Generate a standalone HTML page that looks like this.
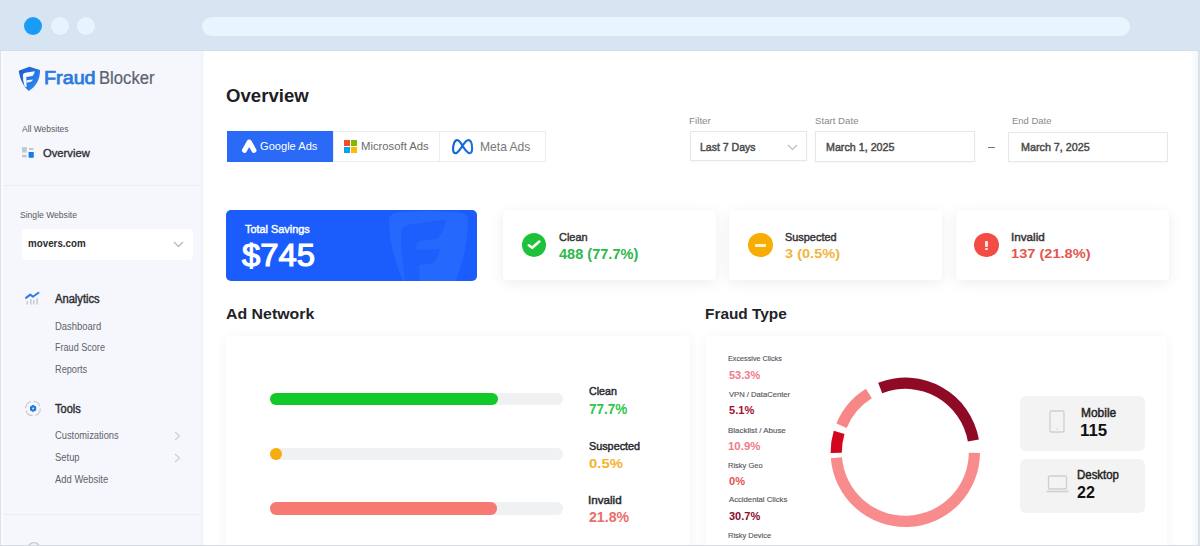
<!DOCTYPE html>
<html><head><meta charset="utf-8"><style>
html,body{margin:0;padding:0;}
body{width:1200px;height:546px;position:relative;overflow:hidden;background:#fff;font-family:"Liberation Sans",sans-serif;}
.t{position:absolute;white-space:nowrap;line-height:1;transform-origin:0 0;}
</style></head><body>
<div style="position:absolute;left:0px;top:0px;width:1200px;height:51px;background:#d6e5f1"></div>
<div style="position:absolute;left:24px;top:16.5px;width:18px;height:18px;border-radius:50%;background:#1a9bf6"></div>
<div style="position:absolute;left:51.2px;top:16.5px;width:18px;height:18px;border-radius:50%;background:#e7f4fe"></div>
<div style="position:absolute;left:77.4px;top:16.5px;width:18px;height:18px;border-radius:50%;background:#e7f4fe"></div>
<div style="position:absolute;left:202px;top:16.5px;width:928px;height:19.0px;background:#e8f4fe;border-radius:9.5px"></div>
<div style="position:absolute;left:0px;top:51px;width:203px;height:495px;background:#f5f7fc"></div>
<div style="position:absolute;left:3px;top:184.5px;width:200px;height:1.5px;background:#ebedf2"></div>
<div style="position:absolute;left:3px;top:513.5px;width:200px;height:1.5px;background:#ebedf2"></div>
<div style="position:absolute;left:200px;top:51px;width:4px;height:495px;background:linear-gradient(90deg,#f5f7fc,#f1f3f7 60%,#fcfcfd)"></div>
<svg style="position:absolute;left:0;top:0" width="60" height="100" viewBox="0 0 60 100">
<defs><linearGradient id="lg" x1="0" y1="0" x2="1" y2="1"><stop offset="0" stop-color="#1c55d4"/><stop offset="1" stop-color="#2e95f2"/></linearGradient></defs>
<path d="M18.8 70.8 L29.5 66.8 L40 69.9 C40.2 78.5 36.5 86 28.7 91 C24 87 19.8 80 18.8 70.8 Z" fill="url(#lg)"/>
<path d="M22.9 74.6 Q23.4 73.1 25.2 72.7 L34.9 71.2 Q34.2 74.3 32.6 75.9 L26.3 77.1 L26.6 87 L24.6 86.5 Q22.7 80.5 22.9 74.6 Z" fill="#fff" opacity="0.97"/>
<path d="M26.4 80.2 L33 79.4 Q32 81.4 30.3 82.1 L26.5 82.7 Z" fill="#fff" opacity="0.9"/>
</svg>
<div class="t" style="left:44.37px;top:69.94px;font-size:17.44px;font-weight:400;color:#2b7be0;transform:scaleX(1.1327);-webkit-text-stroke:0.75px #2b7be0;">Fraud</div>
<div class="t" style="left:99.32px;top:69.94px;font-size:17.44px;font-weight:400;color:#5b6371;transform:scaleX(0.9563);-webkit-text-stroke:0.2px #5b6371;">Blocker</div>
<div class="t" style="left:21.88px;top:123.50px;font-size:9.45px;font-weight:400;color:#555a60;transform:scaleX(0.8981);">All Websites</div>
<svg style="position:absolute;left:0;top:0" width="60" height="170" viewBox="0 0 60 170">
<rect x="22" y="147.1" width="4.8" height="5.5" fill="#c4c8cf"/><rect x="29" y="148" width="4.4" height="2" fill="#c4c8cf"/>
<rect x="22" y="154.8" width="4.8" height="2.6" fill="#c4c8cf"/><rect x="28.6" y="151.9" width="5.2" height="5.9" rx="0.6" fill="#1a7ae3"/></svg>
<div class="t" style="left:42.87px;top:148.00px;font-size:11.34px;font-weight:400;color:#2f3034;transform:scaleX(0.9906);-webkit-text-stroke:0.35px #2f3034;">Overview</div>
<div class="t" style="left:19.91px;top:210.83px;font-size:9.30px;font-weight:400;color:#555a60;transform:scaleX(0.9206);">Single Website</div>
<div style="position:absolute;left:22px;top:228.5px;width:171px;height:31.5px;background:#fff;border-radius:4px"></div>
<div class="t" style="left:27.56px;top:238.68px;font-size:10.42px;font-weight:700;color:#2a2b2f;transform:scaleX(0.9408);">movers.com</div>
<svg style="position:absolute;left:173px;top:241px" width="11" height="7" viewBox="0 0 11 7"><path d="M1 1 L5.5 5.5 L10 1" stroke="#b5b8bd" stroke-width="1.3" fill="none"/></svg>
<svg style="position:absolute;left:0;top:0" width="60" height="320" viewBox="0 0 60 320">
<path d="M26 297.9 L30.3 294.6 L32.9 296.7 L38.5 292.8" stroke="#2c7be5" stroke-width="2" fill="none" stroke-linecap="round" stroke-linejoin="round"/>
<rect x="26.5" y="300.9" width="1.5" height="3.6" fill="#c6cad1"/><rect x="30" y="299" width="1.5" height="5.5" fill="#c6cad1"/>
<rect x="33" y="300" width="1.5" height="4.5" fill="#c6cad1"/><rect x="36.4" y="298" width="1.5" height="6.5" fill="#c6cad1"/></svg>
<div class="t" style="left:55.27px;top:293.06px;font-size:12.21px;font-weight:400;color:#2f3034;transform:scaleX(0.9151);-webkit-text-stroke:0.45px #2f3034;">Analytics</div>
<div class="t" style="left:54.52px;top:320.82px;font-size:10.61px;font-weight:400;color:#606368;transform:scaleX(0.8898);">Dashboard</div>
<div class="t" style="left:54.55px;top:342.42px;font-size:10.61px;font-weight:400;color:#606368;transform:scaleX(0.8553);">Fraud Score</div>
<div class="t" style="left:54.54px;top:364.02px;font-size:10.61px;font-weight:400;color:#606368;transform:scaleX(0.8659);">Reports</div>
<svg style="position:absolute;left:0;top:0" width="60" height="430" viewBox="0 0 60 430">
<circle cx="33" cy="408.5" r="7.3" stroke="#c3c7cd" stroke-width="1.1" fill="none" stroke-dasharray="9 2.5"/>
<path d="M33.1 405.6 L35.6 407 L35.6 409.9 L33.1 411.3 L30.6 409.9 L30.6 407 Z" fill="#1f77e0" stroke="#1f77e0" stroke-width="1.2" stroke-linejoin="round"/>
<circle cx="33.1" cy="408.5" r="1.1" fill="#bfe6ff"/></svg>
<div class="t" style="left:55.05px;top:402.59px;font-size:12.06px;font-weight:400;color:#2f3034;transform:scaleX(0.9172);-webkit-text-stroke:0.45px #2f3034;">Tools</div>
<div class="t" style="left:54.83px;top:430.42px;font-size:10.61px;font-weight:400;color:#606368;transform:scaleX(0.8782);">Customizations</div>
<div class="t" style="left:54.88px;top:452.32px;font-size:10.61px;font-weight:400;color:#606368;transform:scaleX(0.8875);">Setup</div>
<div class="t" style="left:55.28px;top:474.12px;font-size:10.61px;font-weight:400;color:#606368;transform:scaleX(0.8878);">Add Website</div>
<svg style="position:absolute;left:173.5px;top:430.6px" width="7" height="10" viewBox="0 0 7 10"><path d="M1 1 L5.5 5 L1 9" stroke="#cbcdd1" stroke-width="1.1" fill="none"/></svg>
<svg style="position:absolute;left:173.5px;top:452.7px" width="7" height="10" viewBox="0 0 7 10"><path d="M1 1 L5.5 5 L1 9" stroke="#cbcdd1" stroke-width="1.1" fill="none"/></svg>
<div class="t" style="left:225.96px;top:87.34px;font-size:18.02px;font-weight:700;color:#1f2026;transform:scaleX(1.0323);">Overview</div>
<div style="position:absolute;left:226.8px;top:131.2px;width:106.19999999999999px;height:30.600000000000023px;background:#2a6af6"></div>
<div style="position:absolute;left:333px;top:131.2px;width:213px;height:30.600000000000023px;background:#fff;box-shadow:inset 0 0 0 1px #ededed"></div>
<div style="position:absolute;left:438.5px;top:131.2px;width:1.0px;height:30.600000000000023px;background:#ececec"></div>
<svg style="position:absolute;left:240px;top:137px" width="19" height="18" viewBox="0 0 19 18">
<path d="M4.4 13.4 L9.2 5 L14 13.4" stroke="#fff" stroke-width="5" stroke-linecap="round" stroke-linejoin="round" fill="none"/></svg>
<div class="t" style="left:259.94px;top:140.77px;font-size:10.90px;font-weight:400;color:#ffffff;transform:scaleX(1.0193);">Google Ads</div>
<svg style="position:absolute;left:344px;top:140px" width="13" height="13" viewBox="0 0 13 13">
<rect x="0" y="0" width="6" height="6" fill="#f25022"/><rect x="7" y="0" width="6" height="6" fill="#7fba00"/>
<rect x="0" y="7" width="6" height="6" fill="#00a4ef"/><rect x="7" y="7" width="6" height="6" fill="#ffb900"/></svg>
<div class="t" style="left:361.07px;top:140.77px;font-size:10.90px;font-weight:400;color:#6b6b6b;transform:scaleX(1.0366);">Microsoft Ads</div>
<svg style="position:absolute;left:452px;top:139px" width="22" height="16" viewBox="0 0 22 16">
<defs><linearGradient id="mg" x1="0" y1="0" x2="1" y2="0"><stop offset="0" stop-color="#0a64d8"/><stop offset="1" stop-color="#1a6fe0"/></linearGradient></defs>
<path d="M10.5 6.8 C8.5 3.2 7 1.1 5.2 1.1 C2.6 1.1 1.1 5.6 1.1 10 C1.1 12.6 2.1 14.2 3.6 14.2 C5.6 14.2 7.6 11.2 10.5 6.8 C13 2.8 14.6 1.1 16.4 1.1 C18.9 1.1 20.1 5.2 20.1 9.6 C20.1 12.6 19.2 14.2 17.7 14.2 C15.8 14.2 13.4 11.2 10.5 6.8 Z" stroke="url(#mg)" stroke-width="2.1" fill="none" stroke-linejoin="round"/></svg>
<div class="t" style="left:479.50px;top:141.04px;font-size:12.35px;font-weight:400;color:#777777;transform:scaleX(0.9787);">Meta Ads</div>
<div class="t" style="left:688.69px;top:116.74px;font-size:8.58px;font-weight:400;color:#8a8a8a;transform:scaleX(1.1469);">Filter</div>
<div class="t" style="left:814.86px;top:116.57px;font-size:9.01px;font-weight:400;color:#8a8a8a;transform:scaleX(1.0738);">Start Date</div>
<div class="t" style="left:1011.72px;top:116.62px;font-size:8.72px;font-weight:400;color:#8a8a8a;transform:scaleX(1.0864);">End Date</div>
<div style="position:absolute;left:689.5px;top:131.2px;width:117.29999999999995px;height:30.30000000000001px;background:#fff;box-shadow:inset 0 0 0 1px #e7e7e7,0 1px 2px rgba(0,0,0,0.035)"></div>
<div style="position:absolute;left:814.7px;top:131.3px;width:160.5999999999999px;height:31.19999999999999px;background:#fff;box-shadow:inset 0 0 0 1px #e7e7e7,0 1px 2px rgba(0,0,0,0.035)"></div>
<div style="position:absolute;left:1008.3px;top:131.7px;width:160.0px;height:30.80000000000001px;background:#fff;box-shadow:inset 0 0 0 1px #e7e7e7,0 1px 2px rgba(0,0,0,0.035)"></div>
<div class="t" style="left:700.33px;top:141.97px;font-size:10.90px;font-weight:400;color:#4a4a4a;transform:scaleX(0.9666);-webkit-text-stroke:0.45px #4a4a4a;">Last 7 Days</div>
<svg style="position:absolute;left:787px;top:143.5px" width="11" height="7" viewBox="0 0 11 7"><path d="M1 1 L5.5 5.5 L10 1" stroke="#bdbdbd" stroke-width="1.2" fill="none"/></svg>
<div class="t" style="left:826.12px;top:141.57px;font-size:10.90px;font-weight:400;color:#4a4a4a;transform:scaleX(0.9832);-webkit-text-stroke:0.45px #4a4a4a;">March 1, 2025</div>
<div style="position:absolute;left:988.3px;top:147px;width:6.7000000000000455px;height:1.3000000000000114px;background:#777"></div>
<div class="t" style="left:1020.81px;top:142.07px;font-size:10.90px;font-weight:400;color:#4a4a4a;transform:scaleX(0.9876);-webkit-text-stroke:0.45px #4a4a4a;">March 7, 2025</div>
<div style="position:absolute;left:226px;top:209.5px;width:251.2px;height:71.5px;background:#1a5dfc;border-radius:5px;overflow:hidden">
<svg style="position:absolute;left:-226px;top:-209.5px" width="1200" height="300">
<path d="M389 219.5 Q390 213.5 397 212.5 Q428 209.5 460 212.5 Q467.5 213.5 468 220 C467.5 246 462 266 452 290 L407 290 C396 266 389.5 246 389 219.5 Z" fill="#2a6cff" opacity="0.75"/>
<path d="M401 236 Q400.5 226 410 224.5 L446 219.5 Q444 232 437 238.5 L421 241 Q416.5 242 416.5 246.5 L416.5 250 L440 249 Q438 258 434 263 L419 265 L420 290 L407 290 Q401 262 401 236 Z" fill="#1a5dfc" opacity="0.8"/>
</svg></div>
<div class="t" style="left:245.46px;top:224.43px;font-size:11.19px;font-weight:400;color:#ffffff;transform:scaleX(0.9724);-webkit-text-stroke:0.45px #ffffff;">Total Savings</div>
<div class="t" style="left:242.37px;top:239.13px;font-size:31.98px;font-weight:400;color:#ffffff;transform:scaleX(1.0264);-webkit-text-stroke:1.2px #ffffff;">$745</div>
<div style="position:absolute;left:503px;top:210px;width:213px;height:70px;background:#fff;border-radius:4px;box-shadow:0 3px 14px rgba(20,30,60,0.075)"></div>
<div style="position:absolute;left:729px;top:210px;width:213px;height:70px;background:#fff;border-radius:4px;box-shadow:0 3px 14px rgba(20,30,60,0.075)"></div>
<div style="position:absolute;left:956px;top:210px;width:213px;height:70px;background:#fff;border-radius:4px;box-shadow:0 3px 14px rgba(20,30,60,0.075)"></div>
<div style="position:absolute;left:521.8px;top:232.6px;width:24.6px;height:24.6px;border-radius:50%;background:#1ec23a"></div>
<svg style="position:absolute;left:0;top:0" width="1200" height="546"><path d="M528.8 245.3 L532.2 247.8 L539.3 241.6" stroke="#fff" stroke-width="2.6" fill="none" stroke-linecap="round" stroke-linejoin="round"/></svg>
<div class="t" style="left:559.05px;top:231.16px;font-size:11.63px;font-weight:400;color:#333;transform:scaleX(0.9426);-webkit-text-stroke:0.45px #333;">Clean</div>
<div class="t" style="left:559.38px;top:247.34px;font-size:14.24px;font-weight:700;color:#2db84b;transform:scaleX(1.0226);">488 (77.7%)</div>
<div style="position:absolute;left:748.1px;top:232.6px;width:24.6px;height:24.6px;border-radius:50%;background:#f8ad02"></div>
<div style="position:absolute;left:754.6px;top:244.4px;width:11.399999999999977px;height:2.5999999999999943px;background:#fff3d0;border-radius:0.5px"></div>
<div class="t" style="left:785.11px;top:231.16px;font-size:11.63px;font-weight:400;color:#333;transform:scaleX(0.9387);-webkit-text-stroke:0.45px #333;">Suspected</div>
<div class="t" style="left:785.27px;top:247.43px;font-size:13.66px;font-weight:700;color:#f2b43a;transform:scaleX(1.0660);">3 (0.5%)</div>
<div style="position:absolute;left:974.1px;top:232.6px;width:24.6px;height:24.6px;border-radius:50%;background:#f24c45"></div>
<div style="position:absolute;left:985.1px;top:240.5px;width:2.699999999999932px;height:6.5px;background:#ffe6e4;border-radius:1px"></div>
<div style="position:absolute;left:985.1px;top:248.3px;width:2.699999999999932px;height:1.8999999999999773px;background:#ffe6e4;border-radius:1px"></div>
<div class="t" style="left:1010.92px;top:231.16px;font-size:11.63px;font-weight:400;color:#333;transform:scaleX(1.0062);-webkit-text-stroke:0.45px #333;">Invalid</div>
<div class="t" style="left:1011.09px;top:247.43px;font-size:13.66px;font-weight:700;color:#e2574f;transform:scaleX(1.0701);">137 (21.8%)</div>
<div class="t" style="left:226.30px;top:306.30px;font-size:15.12px;font-weight:700;color:#222328;transform:scaleX(1.0522);">Ad Network</div>
<div class="t" style="left:705.26px;top:306.90px;font-size:14.53px;font-weight:700;color:#222328;transform:scaleX(1.0607);">Fraud Type</div>
<div style="position:absolute;left:226px;top:336px;width:464px;height:224px;background:#fff;box-shadow:0 1px 12px rgba(20,30,60,0.05)"></div>
<div style="position:absolute;left:706px;top:336px;width:461px;height:224px;background:#fff;box-shadow:0 1px 12px rgba(20,30,60,0.05)"></div>
<div style="position:absolute;left:270px;top:392.5px;width:293.29999999999995px;height:12.5px;background:#f0f1f3;border-radius:6.25px"></div>
<div style="position:absolute;left:270px;top:392.5px;width:227.7px;height:12.5px;background:#12c92a;border-radius:6.25px"></div>
<div style="position:absolute;left:270px;top:447.75px;width:293.29999999999995px;height:12.5px;background:#f0f1f3;border-radius:6.25px"></div>
<div style="position:absolute;left:270px;top:447.75px;width:12.300000000000011px;height:12.5px;background:#f7ae0c;border-radius:6.25px"></div>
<div style="position:absolute;left:270px;top:502.45px;width:293.29999999999995px;height:12.500000000000057px;background:#f0f1f3;border-radius:6.25px"></div>
<div style="position:absolute;left:270px;top:502.45px;width:227px;height:12.500000000000057px;background:#f67a72;border-radius:6.25px"></div>
<div class="t" style="left:588.77px;top:386.02px;font-size:10.61px;font-weight:400;color:#2a2b30;transform:scaleX(1.0066);-webkit-text-stroke:0.45px #2a2b30;">Clean</div>
<div class="t" style="left:588.73px;top:402.07px;font-size:14.10px;font-weight:700;color:#2dc64a;transform:scaleX(0.9585);">77.7%</div>
<div class="t" style="left:589.01px;top:440.62px;font-size:10.61px;font-weight:400;color:#2a2b30;transform:scaleX(1.0185);-webkit-text-stroke:0.45px #2a2b30;">Suspected</div>
<div class="t" style="left:588.91px;top:456.86px;font-size:13.52px;font-weight:700;color:#f4b22e;transform:scaleX(1.1001);">0.5%</div>
<div class="t" style="left:588.42px;top:495.42px;font-size:10.61px;font-weight:400;color:#2a2b30;transform:scaleX(1.0958);-webkit-text-stroke:0.45px #2a2b30;">Invalid</div>
<div class="t" style="left:589.00px;top:511.41px;font-size:13.81px;font-weight:700;color:#ec6c68;transform:scaleX(1.0256);">21.8%</div>
<div class="t" style="left:728.40px;top:355.26px;font-size:7.85px;font-weight:400;color:#55585e;transform:scaleX(0.9215);-webkit-text-stroke:0.15px #55585e;">Excessive Clicks</div>
<div class="t" style="left:728.67px;top:369.16px;font-size:11.63px;font-weight:700;color:#f27a88;transform:scaleX(0.9466);">53.3%</div>
<div class="t" style="left:728.96px;top:391.46px;font-size:7.85px;font-weight:400;color:#55585e;transform:scaleX(0.9736);-webkit-text-stroke:0.15px #55585e;">VPN / DataCenter</div>
<div class="t" style="left:728.67px;top:404.16px;font-size:11.63px;font-weight:700;color:#a5122f;transform:scaleX(0.9519);">5.1%</div>
<div class="t" style="left:728.35px;top:426.56px;font-size:7.85px;font-weight:400;color:#55585e;transform:scaleX(1.0114);-webkit-text-stroke:0.15px #55585e;">Blacklist / Abuse</div>
<div class="t" style="left:728.29px;top:440.16px;font-size:11.63px;font-weight:700;color:#f27a88;transform:scaleX(0.9829);">10.9%</div>
<div class="t" style="left:728.38px;top:461.86px;font-size:7.85px;font-weight:400;color:#55585e;transform:scaleX(0.9563);-webkit-text-stroke:0.15px #55585e;">Risky Geo</div>
<div class="t" style="left:728.56px;top:474.76px;font-size:11.63px;font-weight:700;color:#e35252;transform:scaleX(0.9490);">0%</div>
<div class="t" style="left:728.98px;top:496.36px;font-size:7.85px;font-weight:400;color:#55585e;transform:scaleX(0.9827);-webkit-text-stroke:0.15px #55585e;">Accidental Clicks</div>
<div class="t" style="left:728.75px;top:510.16px;font-size:11.63px;font-weight:700;color:#8a0c2c;transform:scaleX(0.9472);">30.7%</div>
<div class="t" style="left:728.38px;top:532.36px;font-size:7.85px;font-weight:400;color:#55585e;transform:scaleX(0.9512);-webkit-text-stroke:0.15px #55585e;">Risky Device</div>
<svg style="position:absolute;left:0;top:0" width="1200" height="546"><path d="M980.00 452.95 A74.7 74.7 0 0 1 830.83 458.16 L842.00 457.28 A63.5 63.5 0 0 0 968.80 452.85 Z" fill="#f88b8b"/><path d="M830.60 452.95 A74.7 74.7 0 0 1 833.79 430.71 L844.51 433.95 A63.5 63.5 0 0 0 841.80 452.85 Z" fill="#d2071f"/><path d="M836.34 423.59 A74.7 74.7 0 0 1 865.94 388.81 L871.84 398.33 A63.5 63.5 0 0 0 846.68 427.90 Z" fill="#f78787"/><path d="M878.17 382.70 A74.7 74.7 0 0 1 978.89 439.46 L967.85 441.38 A63.5 63.5 0 0 0 882.23 393.14 Z" fill="#8f0a25"/></svg>
<div style="position:absolute;left:1019.6px;top:396.1px;width:125.60000000000002px;height:54.69999999999999px;background:#f3f3f3;border-radius:6px"></div>
<div style="position:absolute;left:1019.6px;top:458.8px;width:125.60000000000002px;height:54.19999999999999px;background:#f3f3f3;border-radius:6px"></div>
<svg style="position:absolute;left:1049px;top:410px" width="16" height="23" viewBox="0 0 16 23"><rect x="1" y="1" width="14" height="21" rx="1.5" stroke="#cfcfcf" stroke-width="1.3" fill="none"/><circle cx="8" cy="19" r="0.7" fill="#cfcfcf"/></svg>
<svg style="position:absolute;left:1046px;top:475px" width="23" height="18" viewBox="0 0 23 18"><rect x="2.5" y="1" width="18" height="13" rx="1" stroke="#cfcfcf" stroke-width="1.3" fill="none"/><path d="M0.5 16.5 H22.5" stroke="#cfcfcf" stroke-width="1.6"/></svg>
<div class="t" style="left:1080.51px;top:406.94px;font-size:12.35px;font-weight:400;color:#222;transform:scaleX(0.9673);-webkit-text-stroke:0.45px #222;">Mobile</div>
<div class="t" style="left:1080.44px;top:422.91px;font-size:15.70px;font-weight:700;color:#111;transform:scaleX(1.0753);">115</div>
<div class="t" style="left:1077.06px;top:469.34px;font-size:12.35px;font-weight:400;color:#222;transform:scaleX(0.9270);-webkit-text-stroke:0.45px #222;">Desktop</div>
<div class="t" style="left:1077.44px;top:485.31px;font-size:15.70px;font-weight:700;color:#111;transform:scaleX(1.0254);">22</div>
<svg style="position:absolute;left:0;top:0" width="60" height="546"><circle cx="34" cy="549" r="6.3" stroke="#c5c9cf" stroke-width="1.3" fill="none"/></svg>
<div style="position:absolute;left:0px;top:51px;width:1.3px;height:495px;background:#dde0e7"></div>
<div style="position:absolute;left:1.3px;top:51px;width:1.9999999999999998px;height:495px;background:#f9fbff"></div>
<div style="position:absolute;left:1190px;top:51px;width:8.299999999999955px;height:493.5px;background:linear-gradient(90deg,rgba(244,248,252,0),#f2f6fb)"></div>
<div style="position:absolute;left:1198.3px;top:51px;width:1.2999999999999545px;height:495px;background:#dde2ea"></div>
<div style="position:absolute;left:1199.6px;top:51px;width:0.40000000000009095px;height:495px;background:#eef2f6"></div>
<div style="position:absolute;left:0px;top:544.5px;width:1200px;height:1.5px;background:#d8dde3"></div>
<div style="position:absolute;left:0px;top:49.8px;width:1200px;height:1.2000000000000028px;background:#d2dfea"></div>
</body></html>
